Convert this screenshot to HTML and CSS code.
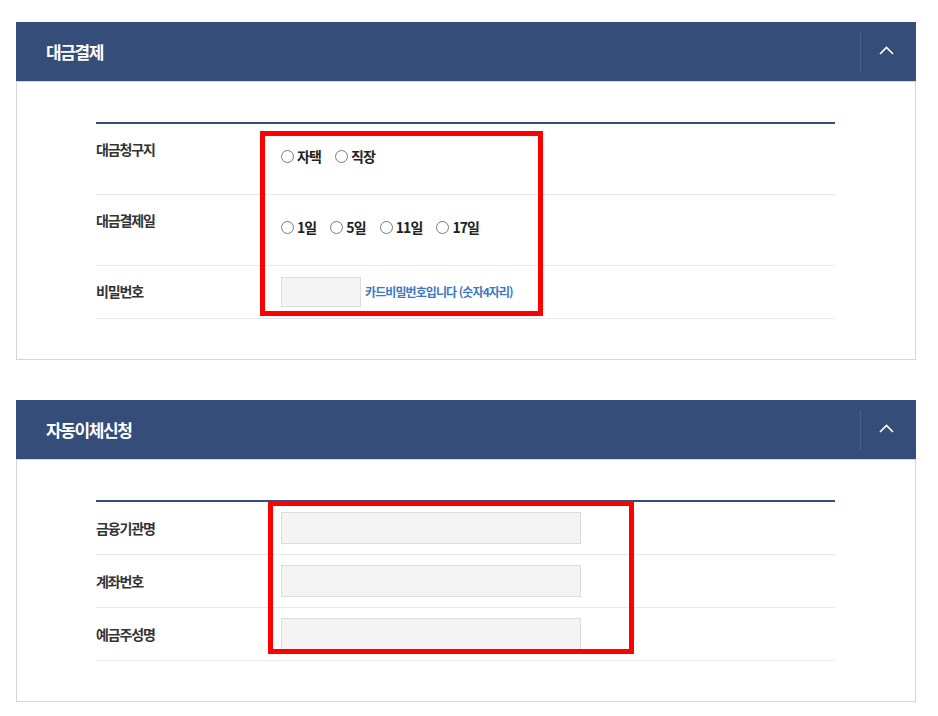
FILE: index.html
```html
<!DOCTYPE html>
<html lang="ko">
<head>
<meta charset="utf-8">
<title>대금결제</title>
<link rel="stylesheet" href="styles.css">
</head>
<body>
<div class="page">
  <section class="panel">
    <div class="panel-head">
      <h2 class="panel-title">대금결제</h2>
      <button class="toggle" type="button" aria-label="접기">
        <svg width="15" height="9" viewBox="0 0 15 9"><path d="M1 8 L7.5 1.5 L14 8" fill="none" stroke="#fff" stroke-width="1.6"/></svg>
      </button>
    </div>
    <div class="panel-body">
      <div class="form-table">
        <div class="row row-radio">
          <div class="label">대금청구지</div>
          <div class="value">
            <div class="radios">
              <label class="radio"><span class="dot"></span><span class="rtext">자택</span></label>
              <label class="radio"><span class="dot"></span><span class="rtext">직장</span></label>
            </div>
          </div>
        </div>
        <div class="row row-radio">
          <div class="label">대금결제일</div>
          <div class="value">
            <div class="radios">
              <label class="radio"><span class="dot"></span><span class="rtext">1일</span></label>
              <label class="radio"><span class="dot"></span><span class="rtext">5일</span></label>
              <label class="radio"><span class="dot"></span><span class="rtext">11일</span></label>
              <label class="radio"><span class="dot"></span><span class="rtext">17일</span></label>
            </div>
          </div>
        </div>
        <div class="row row-pw">
          <div class="label">비밀번호</div>
          <div class="value value-pw">
            <span class="field field-pw"></span>
            <span class="hint">카드비밀번호입니다 (숫자4자리)</span>
          </div>
        </div>
      </div>
    </div>
    <div class="mark mark-1"></div>
  </section>

  <section class="panel">
    <div class="panel-head">
      <h2 class="panel-title">자동이체신청</h2>
      <button class="toggle" type="button" aria-label="접기">
        <svg width="15" height="9" viewBox="0 0 15 9"><path d="M1 8 L7.5 1.5 L14 8" fill="none" stroke="#fff" stroke-width="1.6"/></svg>
      </button>
    </div>
    <div class="panel-body">
      <div class="form-table">
        <div class="row row-input">
          <div class="label">금융기관명</div>
          <div class="value"><span class="field field-wide"></span></div>
        </div>
        <div class="row row-input">
          <div class="label">계좌번호</div>
          <div class="value"><span class="field field-wide"></span></div>
        </div>
        <div class="row row-input">
          <div class="label">예금주성명</div>
          <div class="value"><span class="field field-wide"></span></div>
        </div>
      </div>
    </div>
    <div class="mark mark-2"></div>
  </section>
</div>
</body>
</html>
```

FILE: styles.css
```css
* { box-sizing: border-box; }
html, body { margin: 0; padding: 0; background: #fff; }
body {
  font-family: "Noto Sans CJK KR", "Noto Sans", "Liberation Sans", sans-serif;
  color: #333;
}
.page {
  padding: 22px 0 0 16px;
  width: 938px;
}
.panel {
  position: relative;
  width: 900px;
  margin-bottom: 40px;
}
.panel-head {
  height: 59px;
  background: #344d79;
  display: flex;
  align-items: center;
  justify-content: space-between;
}
.panel-title {
  margin: 0;
  padding-left: 30px;
  font-size: 17px;
  font-weight: 700;
  letter-spacing: -1.4px;
  line-height: 20px;
  color: #fff;
}
.toggle {
  width: 56px;
  height: 40px;
  border: 0;
  border-left: 1px solid rgba(255,255,255,0.13);
  background: transparent;
  padding: 0 0 0 18px;
  display: flex;
  align-items: center;
  justify-content: flex-start;
  cursor: pointer;
}
.toggle svg { display: block; margin-top: -2px; }
.panel-body {
  border: 1px solid #d6d6d6;
  padding: 40px 80px 40px 79px;
}
.form-table {
  border-top: 2px solid #344d79;
}
.row {
  display: flex;
  border-bottom: 1px solid #e8e8e8;
}
.label {
  width: 185px;
  flex: none;
  padding-top: 15px;
  font-size: 14px;
  font-weight: 700;
  line-height: 20px;
  letter-spacing: -1.1px;
  color: #333;
}
.row-input .label { padding-top: 16px; }
.value { flex: 1; }
.row-radio .value { padding: 11px 0; }
.radios {
  height: 48px;
  padding-top: 11px;
  display: flex;
  align-items: flex-start;
}
.radio {
  display: flex;
  align-items: center;
  height: 20px;
  margin-right: 14px;
}
.dot {
  width: 13px;
  height: 13px;
  border: 1px solid #7a7a7a;
  border-radius: 50%;
  background: #fff;
  margin-right: 3px;
  flex: none;
  margin-top: 1px;
}
.rtext {
  font-size: 14px;
  font-weight: 700;
  letter-spacing: -0.9px;
  line-height: 20px;
  color: #222;
}
.row-pw .value {
  padding: 11px 0;
  display: flex;
  align-items: center;
}
.field {
  display: block;
  background: #f4f4f4;
  border: 1px solid #dcdcdc;
}
.field-pw {
  width: 80px;
  height: 30px;
  flex: none;
}
.hint {
  margin-left: 4px;
  font-size: 12px;
  font-weight: 700;
  letter-spacing: -0.9px;
  line-height: 16px;
  color: #3a78c3;
}
.row-input .value { padding: 10px 0; }
.field-wide {
  width: 300px;
  height: 32px;
}
.mark {
  position: absolute;
  border: 5px solid #ff0000;
  pointer-events: none;
}
.mark-1 { left: 244px; top: 109px; width: 283px; height: 185px; }
.mark-2 { left: 252px; top: 101px; width: 366px; height: 153px; }
```
